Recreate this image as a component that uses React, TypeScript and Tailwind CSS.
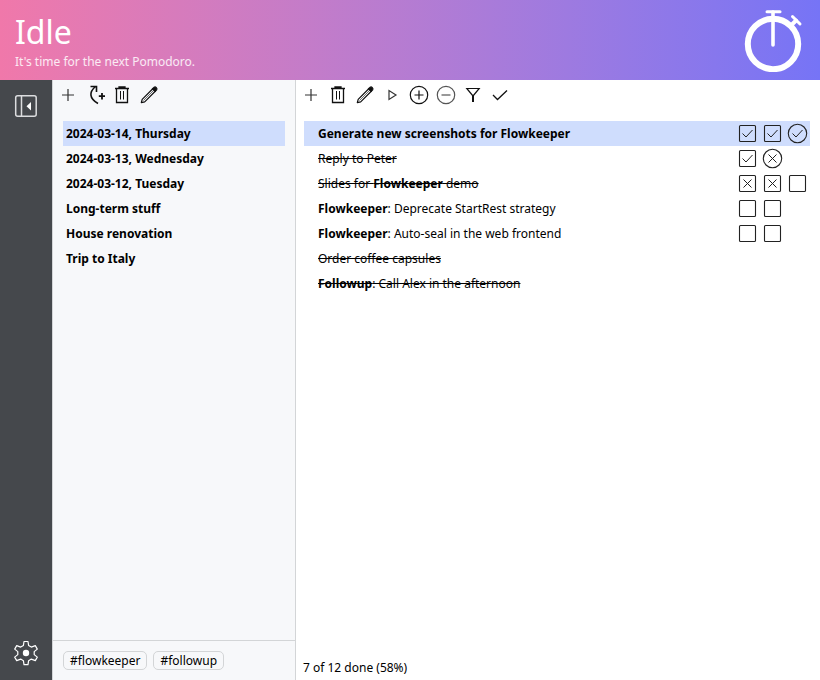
import { useState } from "react";
import type { ReactNode } from "react";

type Mark = "done" | "failed" | "empty";
type Pomodoro = { mark: Mark; round?: boolean };
type Item = { id: string; title: ReactNode; label: string; finished?: boolean; strong?: boolean; pomodoros: Pomodoro[] };

const backlogs = [
  "2024-03-14, Thursday",
  "2024-03-13, Wednesday",
  "2024-03-12, Tuesday",
  "Long-term stuff",
  "House renovation",
  "Trip to Italy",
];

const items: Item[] = [
  {
    id: "screenshots",
    label: "Generate new screenshots",
    title: "Generate new screenshots for Flowkeeper",
    strong: true,
    pomodoros: [{ mark: "done" }, { mark: "done" }, { mark: "done", round: true }],
  },
  {
    id: "reply",
    label: "Reply to Peter",
    title: "Reply to Peter",
    finished: true,
    pomodoros: [{ mark: "done" }, { mark: "failed", round: true }],
  },
  {
    id: "slides",
    label: "Slides",
    title: <>Slides for <b>Flowkeeper</b> demo</>,
    finished: true,
    pomodoros: [{ mark: "failed" }, { mark: "failed" }, { mark: "empty" }],
  },
  {
    id: "strategy",
    label: "Deprecate StartRest strategy",
    title: <><b>Flowkeeper</b>: Deprecate StartRest strategy</>,
    pomodoros: [{ mark: "empty" }, { mark: "empty" }],
  },
  {
    id: "autoseal",
    label: "Auto-seal",
    title: <><b>Flowkeeper</b>: Auto-seal in the web frontend</>,
    pomodoros: [{ mark: "empty" }, { mark: "empty" }],
  },
  { id: "coffee", label: "Coffee", title: "Order coffee capsules", finished: true, pomodoros: [] },
  {
    id: "call",
    label: "Call Alex",
    title: <><b>Followup</b>: Call Alex in the afternoon</>,
    finished: true,
    pomodoros: [],
  },
];

function Icon({ children }: { children: ReactNode }) {
  return (
    <svg viewBox="0 0 20 20" className="size-5" fill="none" stroke="#111" strokeWidth="1.2" aria-hidden="true">
      {children}
    </svg>
  );
}

const plus = <path d="M10 4v12M4 10h12" stroke="#333" />;
const trash = (
  <>
    <path d="M3 3.500h14M7 3V2h6v1" strokeWidth="1.300" />
    <path d="M4.500 3.500v14h11v-14" strokeWidth="1.300" />
    <path d="M8.500 6v8.500M11.500 6v8.500" strokeWidth="1" />
  </>
);
const pencil = (
  <>
    <path d="M2.300 17.700l.9-3.400L14 3.500l2.500 2.500L5.700 16.800z" strokeWidth="1.200" strokeLinejoin="round" />
    <path d="M4.500 15.500L14.500 5.500" strokeWidth="0.6" />
    <path d="M13.500 4L15.200 2.300q1-.8 2.100.4t.4 2.100L16 6.500z" fill="#111" />
  </>
);

function Tool({ name, children }: { name: string; children: ReactNode }) {
  return (
    <button type="button" aria-label={name} title={name} className="grid h-[30px] w-[27px] place-items-center">
      <Icon>{children}</Icon>
    </button>
  );
}

function PomodoroBox({ pomodoro, name }: { pomodoro: Pomodoro; name: string }) {
  const { mark, round } = pomodoro;
  return (
    <label className="grid size-[25px] place-items-center">
      <input
        type="checkbox"
        defaultChecked={mark !== "empty"}
        aria-label={name}
        className="col-start-1 row-start-1 size-[17px] appearance-none"
      />
      <svg
        viewBox="0 0 25 25"
        className="pointer-events-none col-start-1 row-start-1 size-[25px]"
        fill="none"
        stroke="#222"
        strokeWidth="1.1"
        aria-hidden="true"
      >
        {round ? <circle cx="12.500" cy="12.500" r="9.200" /> : <rect x="4.500" y="4.500" width="16" height="16" rx="1" />}
        {mark === "done" && <path d="M7.500 12.500l3.500 3.500 6.500-7" strokeWidth="1" />}
        {mark === "failed" && <path d="M8.500 8.500l8 8M16.500 8.500l-8 8" strokeWidth="1" />}
      </svg>
    </label>
  );
}

export default function App() {
  const [backlog, setBacklog] = useState(0);
  return (
    <div className="flex min-h-screen flex-col bg-white font-['Noto_Sans',sans-serif] text-xs text-black">
      <header className="flex h-20 items-center justify-between bg-linear-to-r from-[#f078aa] to-[#7674f6] pr-[17px] pl-[15px] text-white">
        <div>
          <h1 className="text-[32px] leading-[44px]">Idle</h1>
          <p className="leading-4 text-white/85">It's time for the next Pomodoro.</p>
        </div>
        <svg viewBox="0 0 60 64" className="h-16 w-[60px]" fill="none" stroke="white" strokeLinecap="round" aria-hidden="true">
          <circle cx="30" cy="36" r="25.200" strokeWidth="6" />
          <path d="M30 4v33" strokeWidth="3.600" />
          <path d="M24 3.800h13" strokeWidth="3" />
          <path d="M49.500 8.500l7.500 7.500" strokeWidth="3" />
          <path d="M53 12.500l-4 4" strokeWidth="4" />
        </svg>
      </header>

      <div className="flex flex-1">
        <nav aria-label="Main" className="flex w-[52px] shrink-0 flex-col items-center justify-between bg-[#45484c] pt-3 pb-[13px]">
          <button type="button" aria-label="Toggle backlogs" className="grid size-7 place-items-center">
            <svg viewBox="0 0 28 28" className="size-7" fill="none" stroke="#dcdddf" strokeWidth="1.500" aria-hidden="true">
              <rect x="3.700" y="3.700" width="20.500" height="20.500" rx="2" />
              <path d="M9.500 3.700v20.500" />
              <path d="M19 10v8.500l-4.500-4.250z" fill="white" stroke="none" />
            </svg>
          </button>
          <button type="button" aria-label="Settings" className="grid size-7 place-items-center">
            <svg viewBox="0 0 28 28" className="size-7" fill="none" stroke="white" strokeWidth="1.200" strokeLinejoin="round" aria-hidden="true">
              <path d="M12 2.500h4l.6 4 2.700 1.600 4-1.500 2 3.500-3.100 2.500v3l3.100 2.500-2 3.500-4-1.500-2.700 1.600-.6 4h-4l-.6-4-2.700-1.600-4 1.500-2-3.500 3.100-2.500v-3L2.700 10.100l2-3.500 4 1.500 2.700-1.600z" />
              <circle cx="14" cy="14" r="3.200" fill="white" stroke="none" />
            </svg>
          </button>
        </nav>

        <aside className="flex w-[244px] shrink-0 flex-col border-x border-[#d3d5d7] bg-[#f7f8fa]">
          <div className="flex px-px">
            <Tool name="New backlog">{plus}</Tool>
            <Tool name="New from incomplete">
              <path d="M13 18.500C4 13.500 4 7 10.500 1.500" strokeWidth="1.600" />
              <path d="M5.500 1.500h6v5.500" strokeWidth="1.600" />
              <path d="M17 8v6.500M13.800 11.200h6.200" strokeWidth="1.800" />
            </Tool>
            <Tool name="Delete backlog">{trash}</Tool>
            <Tool name="Rename backlog">{pencil}</Tool>
          </div>
          <ul className="mt-[11px] flex-1 px-[10px] font-bold">
            {backlogs.map((name, i) => (
              <li key={name}>
                <button
                  type="button"
                  onClick={() => setBacklog(i)}
                  className={`block h-[25px] w-full px-[3px] text-left ${backlog === i ? "bg-[#cfddfd]" : ""}`}
                >
                  {name}
                </button>
              </li>
            ))}
          </ul>
          <div className="flex h-10 items-center gap-[6px] border-t border-[#d3d5d7] px-[10px]">
            {["#flowkeeper", "#followup"].map((tag) => (
              <button key={tag} type="button" className="h-[19px] rounded-[5px] border border-[#d3d5d7] px-[6px] leading-4">
                {tag}
              </button>
            ))}
          </div>
        </aside>

        <main className="flex min-w-0 flex-1 flex-col">
          <div className="flex px-px">
            <Tool name="New item">{plus}</Tool>
            <Tool name="Delete item">{trash}</Tool>
            <Tool name="Rename item">{pencil}</Tool>
            <Tool name="Start"><path d="M7 5.500v9l7-4.500z" stroke="#333" /></Tool>
            <Tool name="Add Pomodoro"><circle cx="10" cy="10" r="8.700" /><path d="M10 5.500v9M5.500 10h9" /></Tool>
            <Tool name="Remove Pomodoro"><g stroke="#555"><circle cx="10" cy="10" r="8.700" /><path d="M5.500 10h9" /></g></Tool>
            <Tool name="Filter"><path d="M3.800 3.500h12.400L10 11z" /><path d="M10 10.500V17" strokeWidth="2" /></Tool>
            <Tool name="Complete item"><path d="M3 10l4.500 4.500L17 5.500" strokeWidth="1.300" /></Tool>
          </div>
          <ul className="mt-[11px] flex-1 pr-[10px] pl-2">
            {items.map((item, i) => (
              <li key={item.id} className={`flex h-[25px] items-center justify-between pl-[14px] ${i === 0 ? "bg-[#cfddfd]" : ""}`}>
                <span className={`${item.strong ? "font-bold" : ""} ${item.finished ? "line-through" : ""}`}>{item.title}</span>
                <span className="flex w-[75px]">
                  {item.pomodoros.map((p, n) => (
                    <PomodoroBox key={n} pomodoro={p} name={`${item.label}, Pomodoro ${n + 1}`} />
                  ))}
                </span>
              </li>
            ))}
          </ul>
          <p className="px-[7px] pb-[3px] leading-[18px]">7 of 12 done (58%)</p>
        </main>
      </div>
    </div>
  );
}
